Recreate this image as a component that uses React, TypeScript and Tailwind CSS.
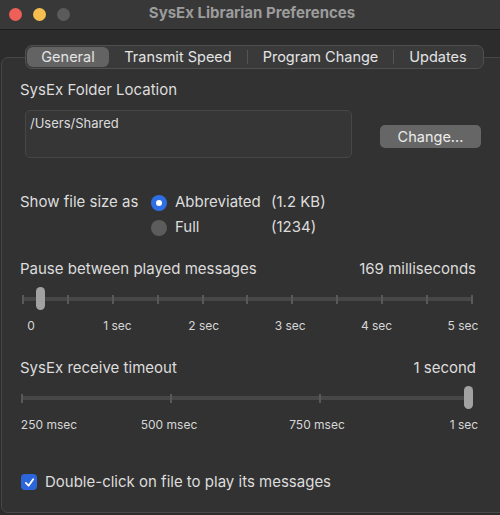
import React from 'react';

const font = { fontFamily: 'Inter, "Liberation Sans", sans-serif' };

function TrafficLights() {
  return (
    <div className="flex items-center gap-[11px] pl-[9px]">
      <div className="w-[13px] h-[13px] rounded-full bg-[#ed5f57]" />
      <div className="w-[13px] h-[13px] rounded-full bg-[#f5be4f]" />
      <div className="w-[13px] h-[13px] rounded-full bg-[#5b5b5b]" />
    </div>
  );
}

function Tabs() {
  const tabs = ['General', 'Transmit Speed', 'Program Change', 'Updates'];
  const widths = ['w-[82px]', 'w-[138px]', 'w-[145px]', 'w-[88px]'];
  return (
    <div className="ml-[23px] -mt-[13px] h-[24px] w-[459px] flex items-center rounded-[7px] border border-[#4f4f4f] bg-[#3a3a3a] p-[1px]">
      {tabs.map((t, i) => (
        <React.Fragment key={t}>
          {i > 1 && <div className="w-px h-[14px] bg-[#545454] shrink-0" />}
          <div
            className={`${widths[i]} shrink-0 h-full flex items-center justify-center text-[14.5px] text-[#e4e4e4] ${
              i === 0 ? 'bg-[#636363] rounded-[6px]' : ''
            }`}
          >
            {t}
          </div>
        </React.Fragment>
      ))}
    </div>
  );
}

// track with evenly spaced ticks and a thumb
function Slider({ ticks, width, thumb, ml }: { ticks: number; width: string; thumb: string; ml: string }) {
  return (
    <div className={`relative h-[24px] ${width} ${ml} flex items-center`}>
      <div className="absolute left-0 right-0 h-[4px] bg-[#474747] rounded-full" />
      <div className="relative w-full flex justify-between items-center">
        {Array.from({ length: ticks }).map((_, i) => (
          <div key={i} className="w-[2px] h-[9px] bg-[#595959]" />
        ))}
      </div>
      <div className={`absolute top-0 ${thumb} w-[9px] h-[23px] rounded-full bg-[#a2a2a2]`} />
    </div>
  );
}

export default function App() {
  return (
    <div className="w-[500px] h-[515px] bg-[#2c2c2c] overflow-hidden flex flex-col" style={font}>
      {/* title bar */}
      <div className="relative h-[30px] bg-[#383838] border-b border-[#1d1d1d] flex items-center">
        <TrafficLights />
        <div className="absolute inset-x-0 top-0 h-[27px] flex items-center justify-center pl-[4px] text-[15px] font-bold text-[#9c9c9c] pointer-events-none">
          SysEx Librarian Preferences
        </div>
      </div>

      {/* tab view box */}
      <div className="mt-[27px] ml-[1px] w-[520px] h-[456px] rounded-[7px] border border-[#474747] bg-[#323232] flex flex-col">
        <Tabs />

        <div className="ml-[18px] w-[460px] flex flex-col text-[15px] text-[#dddddd]">
          <div className="mt-[12px] h-[18px] leading-[18px]">SysEx Folder Location</div>

          <div className="mt-[11px] flex items-start">
            <div className="shrink-0 ml-[5px] w-[327px] h-[48px] rounded-[5px] border border-[#474747] bg-[#363636] px-[4px] pt-[3px] text-[13px] text-[#dcdcdc]">
              /Users/Shared
            </div>
            <button className="shrink-0 ml-[28px] mt-[15px] w-[101px] h-[23px] rounded-[5px] bg-[#666666] text-[14.5px] text-[#ececec] flex items-center justify-center">
              Change...
            </button>
          </div>

          <div className="mt-[32px] flex">
            <div className="w-[131px] shrink-0 h-[25px] flex items-center">Show file size as</div>
            <div className="flex flex-col">
              <div className="h-[25px] flex items-center">
                <div className="w-[120px] shrink-0 flex items-center gap-[8px]">
                  <div className="w-[16px] h-[16px] rounded-full bg-[#2f6fe5] flex items-center justify-center">
                    <div className="w-[6px] h-[6px] rounded-full bg-white" />
                  </div>
                  <span>Abbreviated</span>
                </div>
                <span>(1.2 KB)</span>
              </div>
              <div className="h-[25px] flex items-center">
                <div className="w-[120px] shrink-0 flex items-center gap-[8px]">
                  <div className="w-[16px] h-[16px] rounded-full bg-[#5c5c5c]" />
                  <span>Full</span>
                </div>
                <span>(1234)</span>
              </div>
            </div>
          </div>

          <div className="mt-[20px] w-[456px] h-[18px] leading-[18px] flex justify-between">
            <span>Pause between played messages</span>
            <span>169 milliseconds</span>
          </div>

          <div className="mt-[9px]">
            <Slider ticks={11} width="w-[451px]" thumb="left-[14px]" ml="ml-[2px]" />
          </div>

          <div className="mt-[8px] h-[14px] -ml-[14px] flex gap-[36.4px] text-[12px] leading-[14px] text-[#d6d6d6]">
            {['0', '1 sec', '2 sec', '3 sec', '4 sec', '5 sec'].map((l) => (
              <div key={l} className="w-[50px] shrink-0 text-center">{l}</div>
            ))}
          </div>

          <div className="mt-[26px] w-[456px] h-[18px] leading-[18px] flex justify-between">
            <span>SysEx receive timeout</span>
            <span>1 second</span>
          </div>

          <div className="mt-[9px]">
            <Slider ticks={4} width="w-[449px]" thumb="left-[443px]" ml="ml-[1px]" />
          </div>

          <div className="mt-[8px] h-[14px] flex text-[12px] leading-[14px] text-[#d6d6d6]">
            <div className="w-[60px] shrink-0 -ml-[1px] text-center">250 msec</div>
            <div className="w-[60px] shrink-0 ml-[60px] text-center">500 msec</div>
            <div className="w-[60px] shrink-0 ml-[88px] text-center">750 msec</div>
            <div className="w-[60px] shrink-0 ml-[87px] text-center">1 sec</div>
          </div>

          <div className="mt-[41px] h-[18px] flex items-center gap-[8px]">
            <div className="ml-[1px] w-[16px] h-[16px] rounded-[4px] bg-[#2c66da] flex items-center justify-center">
              <svg width="11" height="11" viewBox="0 0 12 12" fill="none">
                <path d="M2 6.5 L5 9.5 L10 2.5" stroke="white" strokeWidth="2" strokeLinecap="round" strokeLinejoin="round" />
              </svg>
            </div>
            <span>Double-click on file to play its messages</span>
          </div>
        </div>
      </div>
    </div>
  );
}
